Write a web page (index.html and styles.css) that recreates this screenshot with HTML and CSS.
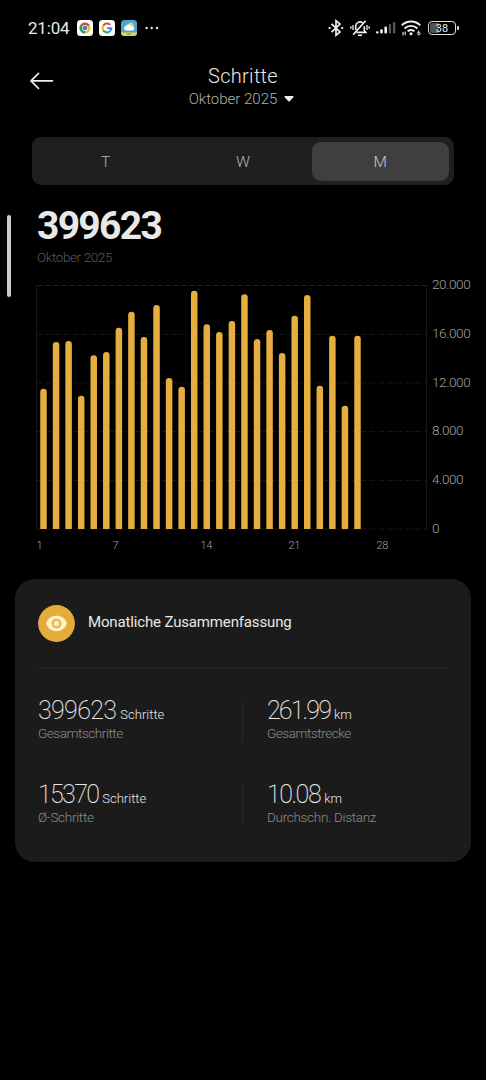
FILE: index.html
```html
<!DOCTYPE html>
<html lang="de">
<head>
  <meta charset="UTF-8" />
  <meta name="viewport" content="width=device-width, initial-scale=1.0" />
  <title>Schritte</title>
  <link rel="stylesheet" href="styles.css">
</head>
<body>
  <div class="statusbar">
    <span class="clock">21:04</span>
    <svg class="app" viewBox="0 0 16 16">
      <rect width="16" height="16" rx="3.5" fill="#fff"/>
      <circle cx="8" cy="8" r="5.6" fill="#f4c430"/>
      <path d="M8 8 3.15 5.2A5.6 5.6 0 0 1 12.85 5.2Z" fill="#dc4437"/>
      <path d="M8 8 3.15 5.2A5.6 5.6 0 0 0 8 13.6Z" fill="#2f9e50"/>
      <circle cx="8" cy="8" r="2.9" fill="#fff"/>
      <circle cx="8" cy="8" r="2.3" fill="#3b78e7"/>
    </svg>
    <svg class="app" viewBox="0 0 16 16">
      <rect width="16" height="16" rx="3.5" fill="#fff"/>
      <g fill="none" stroke-width="2">
        <path d="M11.2 4.9A4.4 4.4 0 0 0 4.2 5.8" stroke="#ea4335"/>
        <path d="M4.2 5.8A4.4 4.4 0 0 0 4.2 10.2" stroke="#fbbc05"/>
        <path d="M4.2 10.2A4.4 4.4 0 0 0 10.9 11.3" stroke="#34a853"/>
        <path d="M10.9 11.3A4.4 4.4 0 0 0 12.4 8.2H8" stroke="#4285f4"/>
      </g>
    </svg>
    <svg class="app" viewBox="0 0 16 16">
      <rect width="16" height="16" rx="3.5" fill="#4aa8d8"/>
      <path d="M0 12.4H16A3.5 3.5 0 0 1 12.5 16H3.5A3.5 3.5 0 0 1 0 12.4Z" fill="#f2cf4a"/>
      <circle cx="9.9" cy="5.4" r="2.7" fill="#d9de5a"/>
      <path d="M4.8 10.4a2.3 2.3 0 0 1 .1-4.5 3 3 0 0 1 5.4.6 2 2 0 0 1 1.6 3.9Z" fill="#fff"/>
      <path d="M6 14h4" stroke="#8a7a30" stroke-width=".9"/>
    </svg>
    <svg class="dots" viewBox="0 0 14 4" fill="#e8e8e8">
      <circle cx="1.6" cy="2" r="1.2"/><circle cx="6.7" cy="2" r="1.2"/><circle cx="12" cy="2" r="1.2"/>
    </svg>

    <svg class="bluetooth" viewBox="0 0 16 18" fill="none" stroke="#f0f0f0" stroke-width="1.7">
      <path d="M3.5 4.8 12 13 8 16.3V1.7L12 5 3.5 13.2"/>
      <circle cx="1.6" cy="9" r=".9" fill="#f0f0f0" stroke-width=".5"/>
      <circle cx="14.2" cy="9" r=".9" fill="#f0f0f0" stroke-width=".5"/>
    </svg>
    <svg class="bell" viewBox="0 0 20 18" fill="none" stroke="#f0f0f0" stroke-width="1.6">
      <path d="M6.5 13.4H15.8L14.3 11.5V7.2M12.6 3.8A4.3 4.3 0 0 0 5.7 7.2V11"/>
      <path d="M8 16.2h4M15.6 1.8 3.2 15.6"/>
      <path d="M3 6v5M17 6v5M.9 7.3v2.4M19.1 7.3v2.4" stroke-width="1.3"/>
    </svg>
    <svg class="signal" viewBox="0 0 20 14">
      <g fill="#f2f2f2">
        <rect x="0" y="10.2" width="2.6" height="2.3" rx="1"/>
        <rect x="4.2" y="8.2" width="2.6" height="4.3" rx="1"/>
        <rect x="8.4" y="5.5" width="2.6" height="7" rx="1"/>
      </g>
      <g fill="#555">
        <rect x="12.7" y="3" width="2.4" height="9.5" rx="1"/>
        <rect x="16.9" y="1" width="2.4" height="11.5" rx="1"/>
      </g>
    </svg>
    <svg class="wifi" viewBox="0 0 20 16" fill="none" stroke="#f2f2f2" stroke-width="1.9">
      <path d="M.7 5.4A13.2 13.2 0 0 1 19.3 5.4M3.6 8.5A9 9 0 0 1 16.4 8.5M6.6 11.4A4.8 4.8 0 0 1 13.4 11.4"/>
      <circle cx="10" cy="13.7" r="1.5" fill="#f2f2f2" stroke="none"/>
      <path d="M2 15.5V12M4.2 11.5V15M18 10.8 16.8 13" stroke-width="1.1"/>
      <circle cx="17.9" cy="13.7" r="1.2" stroke-width="1"/>
    </svg>
    <div class="battery"><span>38</span></div>
  </div>

  <header>
    <svg class="back" viewBox="0 0 24 18" fill="none" stroke="#eee" stroke-width="1.6" stroke-linecap="round" stroke-linejoin="round">
      <path d="M8.5 1.4 1 8.9 8.5 16.4M1 8.9H22.5"/>
    </svg>
    <div class="heading">
      <h1>Schritte</h1>
      <div class="month">Oktober 2025
        <svg viewBox="0 0 10 6"><path d="M1 0H9Q10 .3 9.3 1.2L5.7 5.3Q5 6 4.3 5.3L.7 1.2Q0 .3 1 0Z" fill="#eee"/></svg>
      </div>
    </div>
  </header>

  <main>
    <nav class="tabs">
      <span>T</span>
      <span>W</span>
      <span class="active">M</span>
    </nav>

    <div class="scroll-thumb"></div>

    <section class="total">
      <h2>399623</h2>
      <p>Oktober 2025</p>
    </section>

    <section class="chart">
      <svg class="plot" viewBox="0 0 391 245">
        <g fill="none" stroke="#151515">
          <path d="M.5 .5H391" stroke="#242424" stroke-dasharray="6 2"/>
          <path d="M.5 49.5H391M.5 98H391M.5 146.5H391M.5 195.5H391M.5 244H391" stroke-dasharray="6 3"/>
          <path d="M.5 0V245M390.5 0V245" stroke="#181818"/>
        </g>
        <g id="bars" fill="#e5ae3e"></g>
      </svg>
      <div class="y-axis">
        <span>20.000</span>
        <span>16.000</span>
        <span>12.000</span>
        <span>8.000</span>
        <span>4.000</span>
        <span>0</span>
      </div>
    </section>
    <div class="x-axis">
      <span>1</span>
      <span>7</span>
      <span>14</span>
      <span>21</span>
      <span>28</span>
    </div>

    <section class="card">
      <div class="card-head">
        <svg class="eye" viewBox="0 0 37 37">
          <circle cx="18.5" cy="18.5" r="18.4" fill="#e5ac3c"/>
          <path d="M8.2 18.5C9.5 13.4 14 10.8 18.5 10.8S27.5 13.4 28.8 18.5C27.5 23.6 23 26.2 18.5 26.2S9.5 23.6 8.2 18.5Z" fill="#fff3c8"/>
          <circle cx="18.5" cy="18.5" r="3.9" fill="#fbe9b4" stroke="#dfaa43" stroke-width="1.8"/>
        </svg>
        <h3>Monatliche Zusammenfassung</h3>
      </div>
      <div class="stats">
        <div class="stat">
          <div class="value"><span class="num steps">399623</span> <span class="unit">Schritte</span></div>
          <div class="label">Gesamtschritte</div>
        </div>
        <div class="stat right">
          <div class="value"><span class="num distance">261.99</span> <span class="unit">km</span></div>
          <div class="label">Gesamtstrecke</div>
        </div>
        <div class="stat">
          <div class="value"><span class="num avg-steps">15370</span> <span class="unit">Schritte</span></div>
          <div class="label wide">Ø-Schritte</div>
        </div>
        <div class="stat right">
          <div class="value"><span class="num avg-distance">10.08</span> <span class="unit">km</span></div>
          <div class="label wide">Durchschn. Distanz</div>
        </div>
      </div>
    </section>
  </main>

  <script>
    // Schritte pro Tag
    const steps = [11500, 15330, 15410, 10930, 14240, 14510, 16500, 17810, 15740,
      18360, 12380, 11670, 19530, 16780, 16150, 17050, 19240, 15570, 16310, 14430,
      17480, 19180, 11750, 15845, 10110, 15845];
    const max = 20000;
    const height = 244;
    const dayWidth = 12.56;
    const r = 3.25;
    const bars = document.getElementById('bars');

    // Balken mit runder Oberkante
    steps.forEach((value, i) => {
      const x = 4.25 + i * dayWidth;
      const top = height - value / max * height;
      const bar = document.createElementNS('http://www.w3.org/2000/svg', 'path');
      bar.setAttribute('d', `M${x} ${height}V${top + r}a${r} ${r} 0 0 1 ${2 * r} 0V${height}Z`);
      bars.appendChild(bar);
    });
  </script>
</body>
</html>
```
FILE: styles.css
```css
* {
  box-sizing: border-box;
  margin: 0;
  padding: 0;
}

body {
  background-color: #000;
  color: #e8e8e8;
  font-family: Roboto, "Liberation Sans", sans-serif;
  font-weight: 300;
  height: 1080px;
  overflow: hidden;
}

svg {
  display: block;
  flex: none;
}

/* Statusleiste */
.statusbar {
  display: flex;
  align-items: center;
  height: 55px;
  padding: 0 27px 0 28px;
}

.clock {
  width: 49px;
  font-size: 17px;
  font-weight: 400;
  letter-spacing: -0.2px;
}

.app {
  width: 16px;
  height: 16px;
  margin-right: 6px;
}

.dots {
  width: 14px;
  height: 4px;
  margin-left: 2px;
}

.bluetooth {
  width: 16px;
  height: 18px;
  margin-left: auto;
}

.bell {
  width: 20px;
  height: 18px;
  margin-left: 6px;
}

.signal {
  width: 20px;
  height: 14px;
  margin-left: 6px;
}

.wifi {
  width: 20px;
  height: 16px;
  margin-left: 5px;
}

.battery {
  position: relative;
  width: 28px;
  height: 14px;
  margin: 0 3px 0 7px;
  padding: 1px;
  border: 1px solid #ddd;
  border-radius: 4px;
  background: linear-gradient(90deg, #555 38%, #000 38%);
  background-clip: content-box;
  font-size: 11px;
  font-weight: 400;
  line-height: 11px;
  text-align: center;
}

.battery::after {
  content: "";
  position: absolute;
  right: -4px;
  top: 4px;
  width: 2px;
  height: 4px;
  border-radius: 1px;
  background-color: #ddd;
}

/* Kopfzeile */
header {
  display: grid;
  grid-template-columns: 24px 1fr 24px;
  height: 82px;
  padding: 9px 30px 0;
}

.back {
  width: 24px;
  height: 18px;
  margin-top: 8px;
}

.heading {
  text-align: center;
}

h1 {
  font-size: 20px;
  font-weight: 300;
  line-height: 24px;
  letter-spacing: 0.3px;
}

.month {
  display: flex;
  justify-content: center;
  align-items: center;
  gap: 7px;
  margin-left: -3px;
  color: #b0b0b0;
  font-size: 15px;
  line-height: 22px;
}

.month svg {
  width: 10px;
  height: 6px;
}

/* Tabs */
.tabs {
  display: grid;
  grid-template-columns: repeat(3, 1fr);
  height: 48px;
  margin: 0 32px;
  padding: 5px;
  border-radius: 9px;
  background-color: #1f1f1f;
  color: #b4b4b4;
  font-size: 15.5px;
  line-height: 40px;
  text-align: center;
}

.tabs .active {
  height: 39px;
  border-radius: 9px;
  background-color: #3f3f3f;
  color: #c8c8c8;
}

.scroll-thumb {
  position: absolute;
  left: 7px;
  top: 215px;
  width: 4px;
  height: 82px;
  border-radius: 2px;
  background-color: #ccc;
}

.total {
  height: 100px;
  padding: 20px 0 0 37px;
}

.total h2 {
  font-size: 39px;
  font-weight: 700;
  line-height: 43px;
  letter-spacing: -1.7px;
}

.total p {
  color: #5a5a5a;
  font-size: 13.5px;
  line-height: 18px;
  letter-spacing: -0.4px;
}

/* Diagramm */
.chart {
  display: flex;
  height: 244px;
  margin-left: 36px;
}

.plot {
  width: 391px;
  height: 245px;
}

.y-axis {
  display: flex;
  flex-direction: column;
  justify-content: space-between;
  height: 260px;
  margin: -9px 0 0 5px;
  color: #a0a0a0;
  font-size: 13.5px;
  line-height: 16px;
  letter-spacing: -0.4px;
}

.x-axis {
  display: grid;
  grid-template-columns: 76px 88px 88px 88px 20px;
  margin: 10px 0 0 36.5px;
  color: #a0a0a0;
  font-size: 11px;
  line-height: 14px;
  letter-spacing: -0.3px;
}

/* Zusammenfassung */
.card {
  height: 283px;
  margin: 26px 15px 0;
  padding: 26px 23px 0;
  border-radius: 20px;
  background-color: #1b1b1b;
}

.card-head {
  display: flex;
  gap: 13px;
  height: 64px;
  border-bottom: 2px solid #242424;
}

.eye {
  width: 37px;
  height: 37px;
}

.card-head h3 {
  font-size: 15px;
  font-weight: 400;
  line-height: 35px;
  letter-spacing: -0.15px;
}

.stats {
  display: grid;
  grid-template-columns: 204px 1fr;
  row-gap: 44px;
  margin-top: 32px;
}

.stat {
  height: 40px;
}

.right {
  padding-left: 24px;
  border-left: 1px solid #292929;
}

.value {
  display: flex;
  align-items: baseline;
  gap: 4px;
  height: 22px;
  line-height: 20px;
}

.num {
  font-size: 25px;
  font-weight: 200;
}

.steps {
  letter-spacing: -0.7px;
}

.distance {
  letter-spacing: -1.9px;
}

.avg-steps {
  letter-spacing: -1.7px;
}

.avg-distance {
  letter-spacing: -1.5px;
}

.unit {
  font-size: 13px;
  font-weight: 300;
}

.label {
  margin-top: 1px;
  color: #8c8c8c;
  font-size: 13.5px;
  line-height: 18px;
  letter-spacing: -0.45px;
}

.wide {
  letter-spacing: -0.3px;
}
```
